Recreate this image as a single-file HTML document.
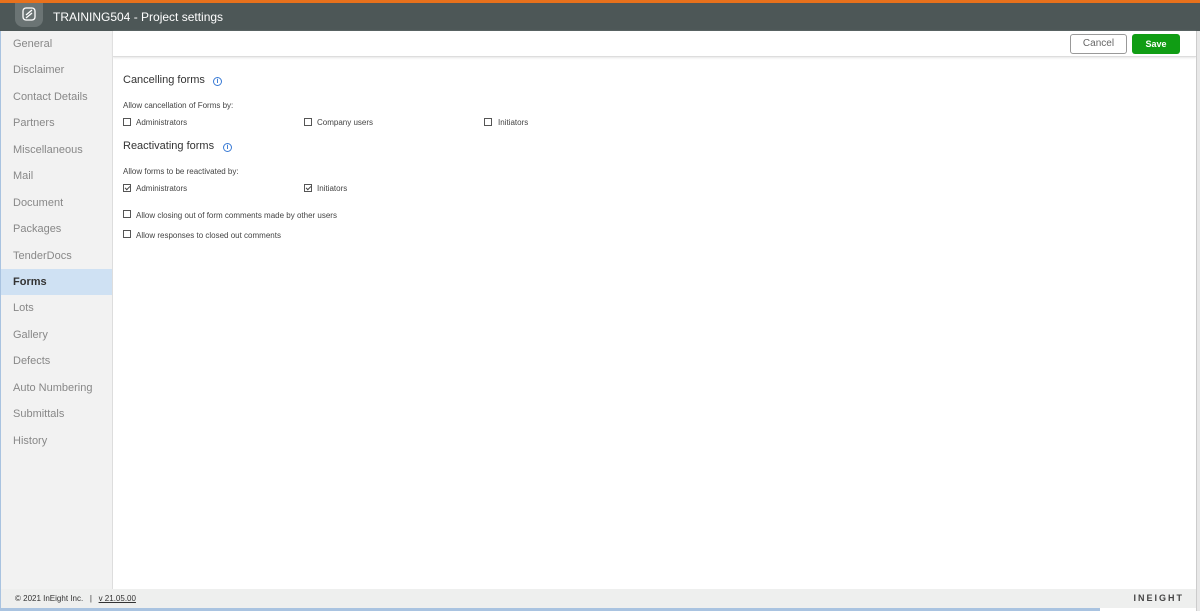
<!DOCTYPE html>
<html><head><style>
*{margin:0;padding:0;box-sizing:border-box}
body{width:1200px;height:611px;overflow:hidden;background:#fff;font-family:"Liberation Sans",sans-serif;position:relative}
.top{position:absolute;left:0;top:0;width:1200px;height:3px;background:#e8711c}
.hdr{position:absolute;left:0;top:3px;width:1200px;height:28px;background:#4d5757;color:#fff;font-size:12px}
.logo{position:absolute;left:15px;top:0;width:28px;height:24px;background:#6b7474;border-radius:0 0 8px 8px}
.hdr .t{position:absolute;left:53px;top:7px}
.side{position:absolute;left:1px;top:31px;width:112px;height:558px;background:#f2f2f2;border-right:1px solid #ddd}
.side div{height:26.45px;line-height:26px;padding-left:12px;font-size:11px;color:#888}
.side .sel{background:#cfe1f3;color:#333;font-weight:bold}
.bar{position:absolute;left:113px;top:31px;width:1083px;height:26px;border-bottom:1px solid #ddd;box-shadow:0 1px 2px #e6e6e6}
.cancel{position:absolute;left:957px;top:3px;width:57px;height:20px;border:1px solid #999;border-radius:3px;font-size:10px;color:#666;text-align:center;line-height:18px}
.save{position:absolute;left:1019px;top:3px;width:48px;height:20px;background:#109d14;border-radius:3px;font-size:9px;color:#fff;font-weight:bold;text-align:center;line-height:20px}
.rb{position:absolute;left:1196px;top:31px;width:4px;height:580px;background:#e8e8e8;border-left:1px solid #ccc}
.c{position:absolute;font-size:8px;color:#444}
.h{position:absolute;font-size:11px;color:#333}
.cb{position:absolute;width:8px;height:8px;border:1px solid #555;background:#fff}
.cb.k::after{content:"";position:absolute;left:2px;top:0px;width:2px;height:4px;border:solid #444;border-width:0 1px 1px 0;transform:rotate(45deg)}
.i{position:absolute;width:9px;height:9px;border:1px solid #3a7bd5;border-radius:50%;color:#3a7bd5;font-size:7px;font-weight:bold;text-align:center;line-height:8px}
.foot{position:absolute;left:1px;top:589px;width:1195px;height:19px;background:#eeefee;font-size:8px;color:#333}
.bb{position:absolute;left:0;top:608px;width:1100px;height:3px;background:#a9c3e0}
.lb{position:absolute;left:0;top:31px;width:1px;height:580px;background:#a9c3e0}
</style></head><body>
<div class="top"></div>
<div class="hdr"><div class="logo"><svg width="28" height="22" viewBox="0 0 28 22"><rect x="8" y="5" width="12" height="12" rx="3" fill="none" stroke="#fff" stroke-width="1.3"/><path d="M11 12l6-5M11 15l6-5" stroke="#fff" stroke-width="1.3"/></svg></div><div class="t">TRAINING504 - Project settings</div></div>
<div class="lb"></div>
<div class="side">
<div>General</div><div>Disclaimer</div><div>Contact Details</div><div>Partners</div><div>Miscellaneous</div><div>Mail</div><div>Document</div><div>Packages</div><div>TenderDocs</div><div class="sel">Forms</div><div>Lots</div><div>Gallery</div><div>Defects</div><div>Auto Numbering</div><div>Submittals</div><div>History</div>
</div>
<div class="bar"><div class="cancel">Cancel</div><div class="save">Save</div></div>
<div class="rb"></div>
<div class="h" style="left:123px;top:74px">Cancelling forms</div><div class="i" style="left:213px;top:77px">i</div>
<div class="c" style="left:123px;top:101px">Allow cancellation of Forms by:</div>
<div class="cb" style="left:123px;top:118px"></div><div class="c" style="left:136px;top:118px">Administrators</div>
<div class="cb" style="left:304px;top:118px"></div><div class="c" style="left:317px;top:118px">Company users</div>
<div class="cb" style="left:484px;top:118px"></div><div class="c" style="left:498px;top:118px">Initiators</div>
<div class="h" style="left:123px;top:140px">Reactivating forms</div><div class="i" style="left:223px;top:143px">i</div>
<div class="c" style="left:123px;top:167px">Allow forms to be reactivated by:</div>
<div class="cb k" style="left:123px;top:184px"></div><div class="c" style="left:136px;top:184px">Administrators</div>
<div class="cb k" style="left:304px;top:184px"></div><div class="c" style="left:317px;top:184px">Initiators</div>
<div class="cb" style="left:123px;top:210px"></div><div class="c" style="left:136px;top:211px">Allow closing out of form comments made by other users</div>
<div class="cb" style="left:123px;top:230px"></div><div class="c" style="left:136px;top:231px">Allow responses to closed out comments</div>
<div class="foot"><span style="position:absolute;left:14px;top:5px">© 2021 InEight Inc. &nbsp; | &nbsp; <u>v 21.05.00</u></span><span style="position:absolute;right:12px;top:4px;font-size:9px;font-weight:bold;letter-spacing:2px;color:#444">INEIGHT</span></div>
<div class="bb"></div>
</body></html>
